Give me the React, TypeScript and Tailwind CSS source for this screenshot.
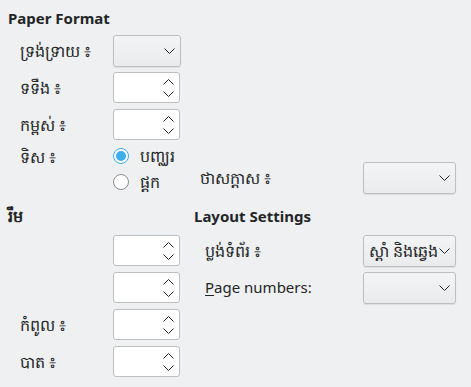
import React from "react";

function Chevron({ up = false }: { up?: boolean }) {
  return (
    <svg width="11" height="6" viewBox="0 0 11 6" fill="none" className="shrink-0">
      <path
        d={up ? "M0.5 5.5 L5.5 0.5 L10.5 5.5" : "M0.5 0.5 L5.5 5.5 L10.5 0.5"}
        stroke="#232627"
        strokeWidth="1"
      />
    </svg>
  );
}

function Combo({ w, text }: { w: string; text?: string }) {
  return (
    <div
      className={`${w} flex h-[32px] items-center justify-between overflow-hidden rounded-[3px] border border-[#bcbebf] bg-gradient-to-b from-[#f3f4f5] to-[#eaebec] pl-[5px] pr-[5px] shadow-[0_1px_1px_rgba(0,0,0,0.08)]`}
    >
      <span className="min-w-0 overflow-hidden whitespace-nowrap text-[16px] leading-[20px]">{text}</span>
      <Chevron />
    </div>
  );
}

function Spin() {
  return (
    <div className="flex h-[31px] w-[67px] flex-col items-end justify-center gap-[6px] rounded-[3px] border border-[#bcbebf] bg-white pr-[5px]">
      <Chevron up />
      <Chevron />
    </div>
  );
}

function Radio({ checked }: { checked?: boolean }) {
  return checked ? (
    <div className="flex h-[16px] w-[16px] items-center justify-center rounded-full border border-[#3daee9] bg-white">
      <div className="h-[10px] w-[10px] rounded-full bg-[#3daee9]" />
    </div>
  ) : (
    <div className="h-[16px] w-[16px] rounded-full border border-[#8a8d8f] bg-white" />
  );
}

function Row({ label, children, h = "h-[31px]" }: { label?: string; children: React.ReactNode; h?: string }) {
  return (
    <div className={`flex ${h} items-center`}>
      <span className="w-[105px] pl-[12px] text-[16px]">{label}</span>
      {children}
    </div>
  );
}

export default function App() {
  return (
    <div className="h-[387px] w-[471px] bg-[#eff0f1] pl-[8px] pt-[8px] font-['Noto_Sans',sans-serif] text-[#232627]">
      <div className="flex">
        <div className="w-[186px]">
          <h2 className="h-[20px] text-[15px] font-bold leading-[20px]">Paper Format</h2>
          <div className="mt-[7px] flex flex-col">
            <Row label="ទ្រង់ទ្រាយ ៖" h="h-[32px]">
              <Combo w="w-[68px]" />
            </Row>
            <div className="mt-[5px]">
              <Row label="ទទឹង ៖">
                <Spin />
              </Row>
            </div>
            <div className="mt-[6px]">
              <Row label="កម្ពស់ ៖">
                <Spin />
              </Row>
            </div>
            <div className="mt-[8px] flex">
              <span className="w-[105px] pl-[12px] text-[16px] leading-[18px]">ទិស ៖</span>
              <div className="flex flex-col gap-[10px]">
                <div className="flex items-center gap-[11px]">
                  <Radio checked />
                  <span className="text-[16px] leading-[16px]">បញ្ឈរ</span>
                </div>
                <div className="flex items-center gap-[11px]">
                  <Radio />
                  <span className="text-[16px] leading-[16px]">ផ្តក</span>
                </div>
              </div>
            </div>
          </div>
        </div>
        <div className="flex flex-1 items-end">
          <div className="mb-[-4px] flex w-full items-center pl-[6px]">
            <span className="w-[163px] text-[16px]">ថាសក្ដាស ៖</span>
            <Combo w="w-[93px]" />
          </div>
        </div>
      </div>

      <div className="mt-[16px] flex">
        <div className="w-[186px]">
          <h2 className="h-[20px] text-[16px] font-bold leading-[20px]">រឹម</h2>
          <div className="mt-[9px] flex flex-col gap-[6px]">
            <Row>
              <Spin />
            </Row>
            <Row>
              <Spin />
            </Row>
            <Row label="កំពូល ៖">
              <Spin />
            </Row>
            <Row label="បាត ៖">
              <Spin />
            </Row>
          </div>
        </div>
        <div className="flex-1">
          <h2 className="h-[20px] text-[15px] font-bold leading-[20px]">Layout Settings</h2>
          <div className="mt-[9px] flex flex-col gap-[6px]">
            <div className="flex h-[31px] items-center pl-[11px]">
              <span className="w-[158px] text-[16px]">ប្លង់ទំព័រ ៖</span>
              <Combo w="w-[93px]" text="ស្តាំ និងឆ្វេង" />
            </div>
            <div className="flex h-[31px] items-center pl-[11px]">
              <span className="w-[158px] text-[15px]">
                <span className="underline underline-offset-2">P</span>age numbers:
              </span>
              <Combo w="w-[93px]" />
            </div>
          </div>
        </div>
      </div>
    </div>
  );
}
